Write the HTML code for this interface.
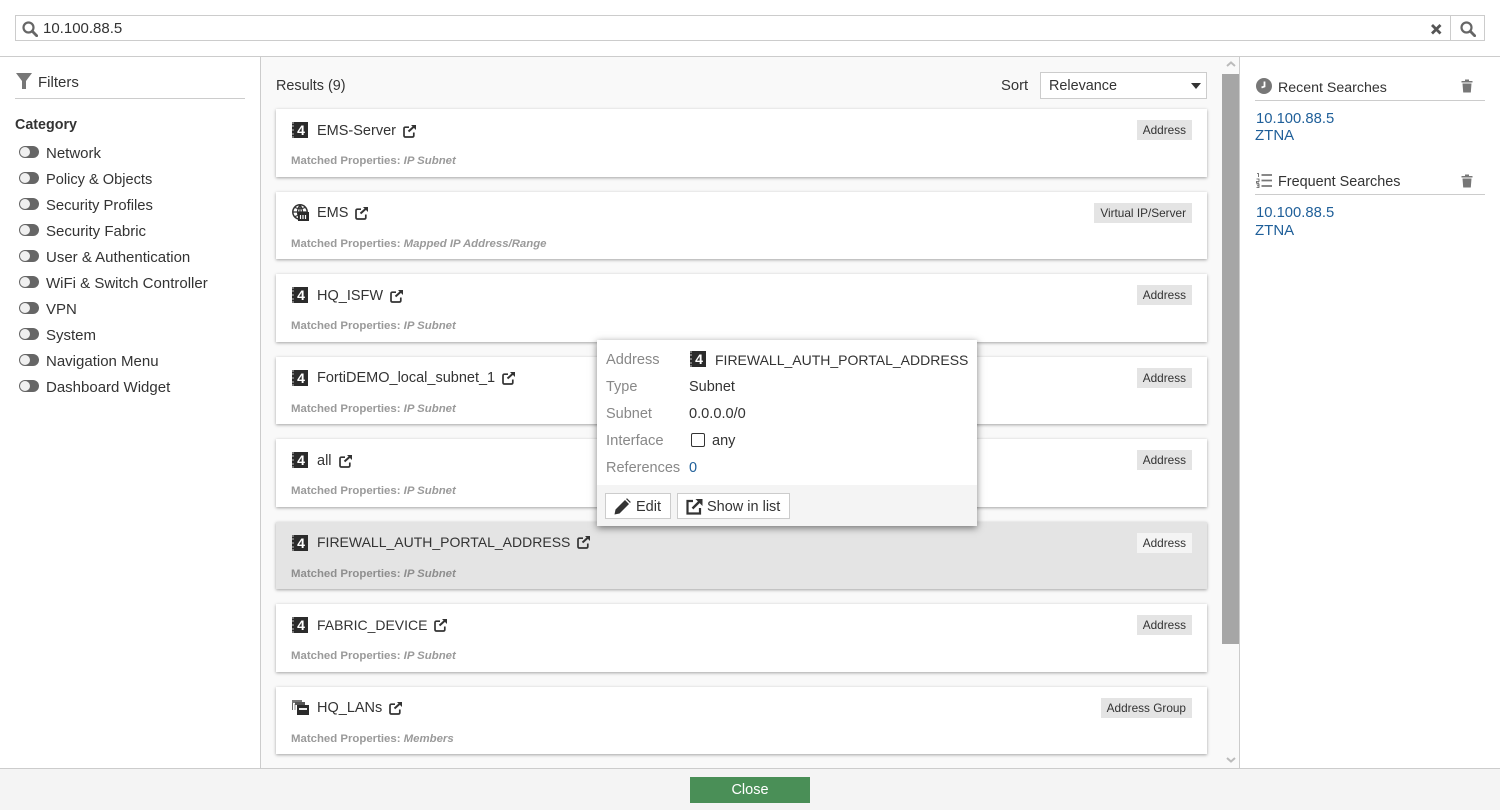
<!DOCTYPE html>
<html><head><meta charset="utf-8"><title>Search</title>
<style>
*{box-sizing:border-box}
html,body{margin:0;padding:0;width:1500px;height:810px;overflow:hidden;background:#fff;font-family:"Liberation Sans",sans-serif;font-size:15px;color:#333}
.a{position:absolute;white-space:nowrap}
.card{position:absolute;left:276px;width:931px;height:68px;background:#fff;box-shadow:0 1px 3px rgba(0,0,0,.35)}
.card.s{height:67px}
.card.sel{background:#e4e4e4}
.card .t{position:absolute;left:41px;top:13px;line-height:18px;font-size:14.5px;color:#333;white-space:nowrap;display:flex;align-items:center}
.card.s .t{top:12px}
.card .t svg{margin-left:7px;flex:none}
.card .m{position:absolute;left:15px;top:45px;font-size:11.4px;line-height:14px;font-weight:bold;color:#9a9a9a;white-space:nowrap}
.card .m i{font-weight:bold}
.card.sel .m{color:#8e8e8e}
.tag{position:absolute;right:15px;top:11px;height:20px;line-height:21px;padding:0 6px;font-size:11.8px;background:#e4e4e4;color:#333;white-space:nowrap}
.sel .tag{background:#f4f4f4}
.i4{position:absolute;display:block;width:16px;height:16px;background:#2b2b2b;color:#fff;font:bold 14px/16px "Liberation Sans",sans-serif;text-align:center;border-left:2px dotted #777}
.card .i4{left:16px;top:13px}
.sw{position:absolute;left:19px;width:20px;height:12px;border-radius:6px;background:#666}
.sw:after{content:"";position:absolute;left:1px;top:1px;width:10px;height:10px;border-radius:5px;background:#f0f0f0}
.cat{position:absolute;left:46px;font-size:15px;line-height:18px;color:#333;white-space:nowrap}
.lnk{color:#1f5f99}
.pl{color:#888;left:606px}
.pv{left:689px;color:#333}
.btn{position:absolute;top:493px;height:26px;background:#fff;border:1px solid #ccc;line-height:26px;font-size:14.5px;color:#333;white-space:nowrap}
</style></head>
<body>
<!-- search -->
<div class="a" style="left:15px;top:15px;width:1470px;height:26px;border:1px solid #ccc"></div>
<div class="a" style="left:1450px;top:15px;width:1px;height:26px;background:#ccc"></div>
<svg class="a" style="left:22px;top:21px" width="16" height="16" viewBox="0 0 16 16"><circle cx="6.500" cy="6.500" r="5" fill="none" stroke="#666" stroke-width="2.200"/><path d="M10.300 10.300L14.700 14.700" stroke="#666" stroke-width="2.800" stroke-linecap="round"/></svg>
<div class="a" style="left:43px;top:20px;line-height:18px;font-size:15px">10.100.88.5</div>
<svg class="a" style="left:1430px;top:23px" width="12" height="12" viewBox="0 0 12 12"><path d="M2 2L10.500 10.500M10.500 2L2 10.500" stroke="#555" stroke-width="2.800"/></svg>
<svg class="a" style="left:1460px;top:21px" width="16" height="16" viewBox="0 0 16 16"><circle cx="6.500" cy="6.500" r="5" fill="none" stroke="#666" stroke-width="2.200"/><path d="M10.300 10.300L14.700 14.700" stroke="#666" stroke-width="2.800" stroke-linecap="round"/></svg>
<div class="a" style="left:0;top:56px;width:1500px;height:1px;background:#ccc"></div>

<!-- center background -->
<div class="a" style="left:260px;top:57px;width:980px;height:711px;background:#f9f9f9;border-left:1px solid #ccc;border-right:1px solid #ccc"></div>

<!-- filters -->
<svg class="a" style="left:16px;top:73px" width="17" height="17" viewBox="0 0 17 17"><path d="M0 0H16L10 8V16H6V8Z" fill="#777"/></svg>
<div class="a" style="left:38px;top:74px;line-height:18px;font-size:15px">Filters</div>
<div class="a" style="left:15px;top:98px;width:230px;height:1px;background:#ccc"></div>
<div class="a" style="left:15px;top:116px;line-height:18px;font-size:14.300px;font-weight:bold">Category</div>
<div class="sw" style="top:146px"></div><div class="cat" style="top:145px">Network</div>
<div class="sw" style="top:172px"></div><div class="cat" style="top:171px;font-size:14.6px">Policy &amp; Objects</div>
<div class="sw" style="top:198px"></div><div class="cat" style="top:197px;font-size:14.800px">Security Profiles</div>
<div class="sw" style="top:224px"></div><div class="cat" style="top:223px">Security Fabric</div>
<div class="sw" style="top:250px"></div><div class="cat" style="top:249px">User &amp; Authentication</div>
<div class="sw" style="top:276px"></div><div class="cat" style="top:275px">WiFi &amp; Switch Controller</div>
<div class="sw" style="top:302px"></div><div class="cat" style="top:301px">VPN</div>
<div class="sw" style="top:328px"></div><div class="cat" style="top:327px">System</div>
<div class="sw" style="top:354px"></div><div class="cat" style="top:353px">Navigation Menu</div>
<div class="sw" style="top:380px"></div><div class="cat" style="top:379px">Dashboard Widget</div>

<!-- results header -->
<div class="a" style="left:276px;top:77px;line-height:18px;font-size:14.4px">Results (9)</div>
<div class="a" style="left:1001px;top:77px;line-height:18px;font-size:14.800px">Sort</div>
<div class="a" style="left:1040px;top:72px;width:167px;height:27px;background:#fff;border:1px solid #ccc;line-height:27px;padding-left:8px;font-size:14.4px">Relevance</div>
<svg class="a" style="left:1191px;top:83px" width="10" height="6" viewBox="0 0 10 6"><path d="M0 0H10L5 6Z" fill="#333"/></svg>

<!-- scrollbar -->
<div class="a" style="left:1222px;top:74px;width:17px;height:570px;background:#a6a6a6"></div>
<svg class="a" style="left:1226px;top:61px" width="10" height="6" viewBox="0 0 10 6"><path d="M1 5L5 1.500L9 5" fill="none" stroke="#bbb" stroke-width="2"/></svg>
<svg class="a" style="left:1226px;top:757px" width="10" height="6" viewBox="0 0 10 6"><path d="M1 1L5 4.500L9 1" fill="none" stroke="#bbb" stroke-width="2"/></svg>

<!-- cards -->
<div class="card" style="top:109px"><span class="i4">4</span><div class="t">EMS-Server<svg width="14" height="14" viewBox="0 0 14 14"><path d="M6 3.200H2.500Q1 3.200 1 4.700V11.500Q1 13 2.500 13H9.300Q10.800 13 10.800 11.500V8.500" fill="none" stroke="#333" stroke-width="1.700"/><path d="M5.500 7.500L10.500 3" fill="none" stroke="#333" stroke-width="2"/><path d="M8 1H13V6Z" fill="#333"/></svg></div><div class="m">Matched Properties: <i>IP Subnet</i></div><div class="tag">Address</div></div>

<div class="card s" style="top:192px"><svg style="position:absolute;left:16px;top:12px" width="17" height="17" viewBox="0 0 17 17"><circle cx="8" cy="8" r="7.200" fill="#fff" stroke="#333" stroke-width="1.500"/><path d="M1 8H15M8 1V15M3 3.500Q8 6 13 3.500M3 12.500Q8 10 13 12.500M8 1Q3 8 8 15M8 1Q13 8 8 15" fill="none" stroke="#333" stroke-width="1.200"/><rect x="6" y="8" width="11" height="9" fill="#2b2b2b"/><path d="M8.500 11V15M11 11V15M13.500 11V15" stroke="#fff" stroke-width="1.200"/></svg><div class="t">EMS<svg width="14" height="14" viewBox="0 0 14 14"><path d="M6 3.200H2.500Q1 3.200 1 4.700V11.500Q1 13 2.500 13H9.300Q10.800 13 10.800 11.500V8.500" fill="none" stroke="#333" stroke-width="1.700"/><path d="M5.500 7.500L10.500 3" fill="none" stroke="#333" stroke-width="2"/><path d="M8 1H13V6Z" fill="#333"/></svg></div><div class="m">Matched Properties: <i>Mapped IP Address/Range</i></div><div class="tag">Virtual IP/Server</div></div>

<div class="card" style="top:274px"><span class="i4">4</span><div class="t">HQ_ISFW<svg width="14" height="14" viewBox="0 0 14 14"><path d="M6 3.200H2.500Q1 3.200 1 4.700V11.500Q1 13 2.500 13H9.300Q10.800 13 10.800 11.500V8.500" fill="none" stroke="#333" stroke-width="1.700"/><path d="M5.500 7.500L10.500 3" fill="none" stroke="#333" stroke-width="2"/><path d="M8 1H13V6Z" fill="#333"/></svg></div><div class="m">Matched Properties: <i>IP Subnet</i></div><div class="tag">Address</div></div>

<div class="card s" style="top:357px"><span class="i4">4</span><div class="t">FortiDEMO_local_subnet_1<svg width="14" height="14" viewBox="0 0 14 14"><path d="M6 3.200H2.500Q1 3.200 1 4.700V11.500Q1 13 2.500 13H9.300Q10.800 13 10.800 11.500V8.500" fill="none" stroke="#333" stroke-width="1.700"/><path d="M5.500 7.500L10.500 3" fill="none" stroke="#333" stroke-width="2"/><path d="M8 1H13V6Z" fill="#333"/></svg></div><div class="m">Matched Properties: <i>IP Subnet</i></div><div class="tag">Address</div></div>

<div class="card" style="top:439px"><span class="i4">4</span><div class="t">all<svg width="14" height="14" viewBox="0 0 14 14"><path d="M6 3.200H2.500Q1 3.200 1 4.700V11.500Q1 13 2.500 13H9.300Q10.800 13 10.800 11.500V8.500" fill="none" stroke="#333" stroke-width="1.700"/><path d="M5.500 7.500L10.500 3" fill="none" stroke="#333" stroke-width="2"/><path d="M8 1H13V6Z" fill="#333"/></svg></div><div class="m">Matched Properties: <i>IP Subnet</i></div><div class="tag">Address</div></div>

<div class="card s sel" style="top:522px"><span class="i4">4</span><div class="t" style="font-size:14px;top:11px">FIREWALL_AUTH_PORTAL_ADDRESS<svg width="14" height="14" viewBox="0 0 14 14"><path d="M6 3.200H2.500Q1 3.200 1 4.700V11.500Q1 13 2.500 13H9.300Q10.800 13 10.800 11.500V8.500" fill="none" stroke="#333" stroke-width="1.700"/><path d="M5.500 7.500L10.500 3" fill="none" stroke="#333" stroke-width="2"/><path d="M8 1H13V6Z" fill="#333"/></svg></div><div class="m">Matched Properties: <i>IP Subnet</i></div><div class="tag">Address</div></div>

<div class="card" style="top:604px"><span class="i4">4</span><div class="t" style="font-size:14px;top:12px">FABRIC_DEVICE<svg width="14" height="14" viewBox="0 0 14 14"><path d="M6 3.200H2.500Q1 3.200 1 4.700V11.500Q1 13 2.500 13H9.300Q10.800 13 10.800 11.500V8.500" fill="none" stroke="#333" stroke-width="1.700"/><path d="M5.500 7.500L10.500 3" fill="none" stroke="#333" stroke-width="2"/><path d="M8 1H13V6Z" fill="#333"/></svg></div><div class="m">Matched Properties: <i>IP Subnet</i></div><div class="tag">Address</div></div>

<div class="card s" style="top:687px"><svg style="position:absolute;left:16px;top:13px" width="17" height="16" viewBox="0 0 17 16"><rect x="0" y="0" width="10" height="3" fill="#777"/><path d="M.5 3V10" stroke="#666"/><path d="M2 5H4M2 7H4M2 9H4" stroke="#888"/><rect x="3" y="2" width="10" height="3" fill="#555"/><rect x="5" y="5" width="12" height="10" fill="#2b2b2b"/><rect x="7" y="8" width="8" height="2" fill="#eee"/></svg><div class="t">HQ_LANs<svg width="14" height="14" viewBox="0 0 14 14"><path d="M6 3.200H2.500Q1 3.200 1 4.700V11.500Q1 13 2.500 13H9.300Q10.800 13 10.800 11.500V8.500" fill="none" stroke="#333" stroke-width="1.700"/><path d="M5.500 7.500L10.500 3" fill="none" stroke="#333" stroke-width="2"/><path d="M8 1H13V6Z" fill="#333"/></svg></div><div class="m">Matched Properties: <i>Members</i></div><div class="tag">Address Group</div></div>

<!-- right panel -->
<svg class="a" style="left:1256px;top:78px" width="16" height="16" viewBox="0 0 16 16"><circle cx="8" cy="8" r="8" fill="#777"/><path d="M8.500 3.500V8.500L5.500 9.500" fill="none" stroke="#fff" stroke-width="1.800"/></svg>
<div class="a" style="left:1278px;top:79px;line-height:18px;font-size:14.200px">Recent Searches</div>
<svg class="a" style="left:1461px;top:79px" width="12" height="14" viewBox="0 0 12 14"><path d="M0.500 2H4V0.500H8V2H11.500V3.500H0.500ZM1.500 4.500H10.500L9.800 13.500H2.200Z" fill="#777"/></svg>
<div class="a" style="left:1255px;top:100px;width:230px;height:1px;background:#ccc"></div>
<div class="a lnk" style="left:1256px;top:110px;line-height:18px;font-size:14.800px">10.100.88.5</div>
<div class="a lnk" style="left:1255px;top:127px;line-height:18px">ZTNA</div>

<svg class="a" style="left:1256px;top:173px" width="17" height="15" viewBox="0 0 17 15"><path d="M5.500 2H16M5.500 7.500H16M5.500 13H16" stroke="#777" stroke-width="1.800"/><path d="M1 .5H2.500V4M.5 6H3V8.500H.5V10H3M.5 11H3V14.500H.5M1 12.800H3" fill="none" stroke="#555" stroke-width=".8"/></svg>
<div class="a" style="left:1278px;top:173px;line-height:18px;font-size:14.4px">Frequent Searches</div>
<svg class="a" style="left:1461px;top:174px" width="12" height="14" viewBox="0 0 12 14"><path d="M0.500 2H4V0.500H8V2H11.500V3.500H0.500ZM1.500 4.500H10.500L9.800 13.500H2.200Z" fill="#777"/></svg>
<div class="a" style="left:1255px;top:194px;width:230px;height:1px;background:#ccc"></div>
<div class="a lnk" style="left:1256px;top:204px;line-height:18px;font-size:14.800px">10.100.88.5</div>
<div class="a lnk" style="left:1255px;top:222px;line-height:18px">ZTNA</div>

<!-- popover -->
<div class="a" style="left:597px;top:340px;width:380px;height:186px;background:#fff;box-shadow:0 2px 7px rgba(0,0,0,.5)"></div>
<div class="a" style="left:597px;top:485px;width:380px;height:41px;background:#f4f4f4"></div>
<div class="a pl" style="top:351px;line-height:18px;font-size:14.6px">Address</div>
<span class="i4" style="left:690px;top:351px">4</span>
<div class="a" style="left:715px;top:351px;line-height:18px;font-size:14px">FIREWALL_AUTH_PORTAL_ADDRESS</div>
<div class="a pl" style="top:378px;line-height:18px;font-size:14.5px">Type</div>
<div class="a pv" style="top:378px;line-height:18px;font-size:14.5px">Subnet</div>
<div class="a pl" style="top:405px;line-height:18px;font-size:14.5px">Subnet</div>
<div class="a pv" style="top:405px;line-height:18px;font-size:14.6px">0.0.0.0/0</div>
<div class="a pl" style="top:432px;line-height:18px;font-size:14.8px">Interface</div>
<div class="a" style="left:691px;top:433px;width:14px;height:14px;border:1.500px solid #333;border-radius:2px"></div>
<div class="a" style="left:712px;top:432px;line-height:18px;font-size:14.5px">any</div>
<div class="a pl" style="top:459px;line-height:18px;font-size:14.5px">References</div>
<div class="a lnk" style="left:689px;top:459px;line-height:18px;font-size:14.5px">0</div>

<div class="btn" style="left:605px;width:66px;padding-left:30px">Edit</div>
<svg class="a" style="left:614px;top:498px" width="17" height="17" viewBox="0 0 17 17"><path d="M0.500 16.500L1.500 11.500L11 2L15 6L5.500 15.500ZM12 1L13 0.200L16.800 4L16 5Z" fill="#333"/></svg>
<div class="btn" style="left:677px;width:113px;padding-left:29px">Show in list</div>
<svg class="a" style="left:686px;top:498px" width="17" height="17" viewBox="0 0 17 17"><path d="M7 3H1.500V15.500H14V10" fill="none" stroke="#333" stroke-width="2.200"/><path d="M6.500 10.500L13 4" stroke="#333" stroke-width="2.400"/><path d="M9.500 1H16.500V8Z" fill="#333"/></svg>

<!-- footer -->
<div class="a" style="left:0;top:768px;width:1500px;height:42px;background:#f4f4f4;border-top:1px solid #ccc"></div>
<div class="a" style="left:690px;top:777px;width:120px;height:26px;background:#4a8f57;color:#fff;text-align:center;line-height:27px;font-size:14.5px">Close</div>
</body></html>
